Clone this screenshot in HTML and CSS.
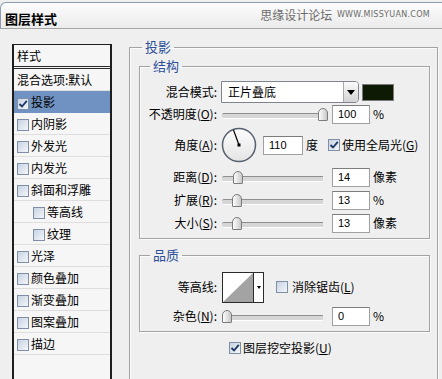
FILE: index.html
```html
<!DOCTYPE html>
<html lang="zh-CN">
<head>
    <meta charset="UTF-8">
    <title>图层样式</title>
    <link rel="stylesheet" href="styles.css">
</head>
<body>

    <div class="titlebar">
        <span class="title">图层样式</span>
        <span class="mark">思缘设计论坛 <span class="url">WWW.MISSYUAN.COM</span></span>
    </div>

    <div class="main">
        <div class="styles">
            <div class="head">样式</div>
            <div class="item">混合选项:默认</div>
            <div class="item sel"><span class="cb on"><svg width="10" height="10" viewBox="0 0 10 10"><path d="M1.5 5 L4 7.5 L8.8 1.8" fill="none" stroke="#1d3763" stroke-width="1.8"/></svg></span>投影</div>
            <div class="item"><span class="cb"></span>内阴影</div>
            <div class="item"><span class="cb"></span>外发光</div>
            <div class="item"><span class="cb"></span>内发光</div>
            <div class="item"><span class="cb"></span>斜面和浮雕</div>
            <div class="item sub"><span class="cb"></span>等高线</div>
            <div class="item sub"><span class="cb"></span>纹理</div>
            <div class="item"><span class="cb"></span>光泽</div>
            <div class="item"><span class="cb"></span>颜色叠加</div>
            <div class="item"><span class="cb"></span>渐变叠加</div>
            <div class="item"><span class="cb"></span>图案叠加</div>
            <div class="item"><span class="cb"></span>描边</div>
        </div>

        <fieldset class="group outer">
            <legend>投影</legend>

            <fieldset class="group inner">
                <legend>结构</legend>

                <div class="row r-blend">
                    <span class="lbl">混合模式:</span>
                    <div class="select">
                        <span class="val">正片叠底</span>
                        <span class="drop"><i class="arrow"></i></span>
                    </div>
                    <span class="swatch"></span>
                </div>

                <div class="row r-op">
                    <span class="lbl">不透明度(<u>O</u>):</span>
                    <div class="slider"><span class="thumb" style="left: 96px"></span></div>
                    <span class="num">100</span>
                    <span class="unit">%</span>
                </div>

                <div class="row r-angle">
                    <span class="lbl">角度(<u>A</u>):</span>
                    <svg class="dial" width="36" height="36" viewBox="0 0 36 36">
                        <defs>
                            <linearGradient id="dialfill" x1="0" y1="0" x2="0" y2="1">
                                <stop offset="0" stop-color="#fdfdfd"/>
                                <stop offset="1" stop-color="#e4e4e4"/>
                            </linearGradient>
                        </defs>
                        <circle cx="18" cy="18" r="16.5" fill="url(#dialfill)" stroke="#56606f" stroke-width="1.5"/>
                        <line x1="18" y1="18" x2="12.5" y2="3" stroke="#000" stroke-width="1.2"/>
                        <rect x="16.5" y="16.5" width="3" height="3" fill="#000"/>
                    </svg>
                    <span class="num wide">110</span>
                    <span class="unit">度</span>
                    <span class="cb on gl"><svg width="10" height="10" viewBox="0 0 10 10"><path d="M1.5 5 L4 7.5 L8.8 1.8" fill="none" stroke="#1d3763" stroke-width="1.8"/></svg></span>
                    <span class="cbtext">使用全局光(<u>G</u>)</span>
                </div>

                <div class="row r-dist">
                    <span class="lbl">距离(<u>D</u>):</span>
                    <div class="slider"><span class="thumb" style="left: 11px"></span></div>
                    <span class="num">14</span>
                    <span class="unit">像素</span>
                </div>

                <div class="row r-spread">
                    <span class="lbl">扩展(<u>R</u>):</span>
                    <div class="slider"><span class="thumb" style="left: 10px"></span></div>
                    <span class="num">13</span>
                    <span class="unit">%</span>
                </div>

                <div class="row r-size">
                    <span class="lbl">大小(<u>S</u>):</span>
                    <div class="slider"><span class="thumb" style="left: 10px"></span></div>
                    <span class="num">13</span>
                    <span class="unit">像素</span>
                </div>
            </fieldset>

            <fieldset class="group quality">
                <legend>品质</legend>

                <div class="row r-contour">
                    <span class="lbl">等高线:</span>
                    <div class="contour">
                        <svg width="30" height="29" viewBox="0 0 30 29">
                            <rect width="30" height="29" fill="#fff"/>
                            <polygon points="0,29 30,0 30,29" fill="#a3a3a3"/>
                        </svg>
                        <span class="cdrop"><i class="arrow small"></i></span>
                    </div>
                    <span class="cb aa"></span>
                    <span class="cbtext">消除锯齿(<u>L</u>)</span>
                </div>

                <div class="row r-noise">
                    <span class="lbl">杂色(<u>N</u>):</span>
                    <div class="slider"><span class="thumb" style="left: 0px"></span></div>
                    <span class="num">0</span>
                    <span class="unit">%</span>
                </div>
            </fieldset>

            <div class="knockout">
                <span class="cb on"><svg width="10" height="10" viewBox="0 0 10 10"><path d="M1.5 5 L4 7.5 L8.8 1.8" fill="none" stroke="#1d3763" stroke-width="1.8"/></svg></span>
                <span class="cbtext">图层挖空投影(<u>U</u>)</span>
            </div>
        </fieldset>
    </div>

</body>
</html>
```

FILE: styles.css
```css
* { margin: 0; padding: 0; box-sizing: border-box; }
body { width: 442px; height: 379px; overflow: hidden; background: #efefef; color: #000; font: 12px/16px "Noto Sans CJK SC", sans-serif; }
u { text-decoration: underline; }

.titlebar { display: flex; align-items: flex-start; justify-content: space-between; height: 27px; margin-top: 2px; padding: 0 12px 0 4px; background: linear-gradient(#fcfcfc, #ebebeb); border-top: 1px solid #8e9bb0; border-left: 1px solid #8e9bb0; border-bottom: 1px solid #a5a5a5; border-top-left-radius: 6px; }
.title { margin-top: 8px; font-size: 13px; font-weight: bold; }
.mark { margin-top: 4px; color: #6b6b6b; font-size: 12px; }
.url { font: 8px/16px "DejaVu Sans", sans-serif; letter-spacing: 0.3px; vertical-align: top; margin-left: 2px; }

.main { display: flex; align-items: flex-start; padding-left: 12px; }

/* left list runs off the bottom of the dialog, so no bottom border */
.styles { width: 100px; height: 335px; margin-top: 15px; background: #f6f6f6; border: 1px solid #1e1e1e; border-width: 1px 2px 0; }
.head { height: 24px; line-height: 21px; padding-left: 3px; border-bottom: 3px double #2a2a2a; }
.item { height: 22px; line-height: 21px; padding-left: 3px; border-bottom: 1px solid #dedede; white-space: nowrap; }
.item.sel { background: #7092c2; border-bottom-color: #7092c2; }
.item.sub { padding-left: 19px; }
.item .cb { margin-right: 2px; vertical-align: -2px; }

.cb { display: inline-flex; align-items: center; justify-content: center; width: 12px; height: 12px; border: 1px solid #7f8fa6; background: linear-gradient(135deg, #c7d3e3, #f4f6f9); }

.group { border: 1px solid #a3a3a3; box-shadow: inset 1px 1px 0 #fbfbfb, 1px 1px 0 #fbfbfb; min-inline-size: 0; }
.group legend { font-size: 13px; line-height: 16px; color: #2d4f99; padding: 0 3px; }
.outer { width: 309px; height: 340px; margin: 10px 0 0 17px; padding: 0 7px 0 9px; border-bottom: 0; }
.outer > legend { margin-left: 3px; }
.inner { margin-top: 3px; padding: 7px 0 3px 0; }
.inner > legend, .quality > legend { margin-left: 10px; }
.quality { margin-top: 8px; padding: 8px 0 2px 0; }

.row { display: flex; align-items: center; white-space: nowrap; }
.lbl { width: 77px; text-align: right; }
.r-blend { height: 22px; }
.r-op { height: 22px; }
.r-angle { height: 40px; }
.r-dist { height: 24px; }
.r-spread { height: 22px; }
.r-size { height: 24px; }
.r-contour { height: 32px; }
.r-noise { height: 26px; }

.select { display: flex; width: 138px; height: 22px; margin-left: 4px; background: #fff; border: 1px solid #80848c; border-radius: 0 4px 4px 0; }
.select .val { flex: 1; padding-left: 6px; line-height: 20px; }
.drop { display: flex; align-items: center; justify-content: center; width: 15px; background: linear-gradient(#fbfbfb, #d2d2d2); border-left: 1px solid #a9a9a9; border-radius: 0 3px 3px 0; }
.arrow { width: 0; height: 0; border-left: 4px solid transparent; border-right: 4px solid transparent; border-top: 5px solid #000; }
.arrow.small { border-width: 3px 2.5px 0; }
.swatch { width: 32px; height: 17px; margin-left: 3px; background: #0f1a04; border: 1px solid #7b7b7b; }

.slider { position: relative; width: 101px; height: 13px; margin-left: 5px; }
.slider::before { content: ""; position: absolute; left: 0; right: 0; top: 5px; height: 4px; background: #d6d6d6; border-top: 1px solid #8e8e8e; border-bottom: 1px solid #fff; border-radius: 2px 0 0 2px; }
.thumb { position: absolute; top: 0; width: 10px; height: 13px; background: linear-gradient(90deg, #fdfdfd, #c9c9c9); border: 1px solid #7c7c7c; border-radius: 5px 5px 1px 1px; }

.num { width: 38px; height: 19px; margin-left: 9px; padding-left: 5px; background: #fff; border: 1px solid #a0a0a0; border-top-color: #7d7d7d; font: 11px/17px "Liberation Sans", sans-serif; }
.num.wide { width: 40px; margin-left: 6px; }
.unit { margin-left: 3px; }
.dial { margin-left: 4px; }
.gl { margin-left: 10px; }
.cbtext { margin-left: 2px; }

.contour { display: flex; width: 42px; height: 31px; margin-left: 5px; background: #fff; border: 1px solid #2b2b2b; }
.cdrop { display: flex; align-items: center; justify-content: center; width: 10px; border-left: 1px solid #2b2b2b; }
.aa { margin-left: 12px; }
.r-contour .cbtext { margin-left: 4px; }

.knockout { display: flex; align-items: center; height: 16px; margin-top: 8px; padding-left: 90px; white-space: nowrap; }
```
